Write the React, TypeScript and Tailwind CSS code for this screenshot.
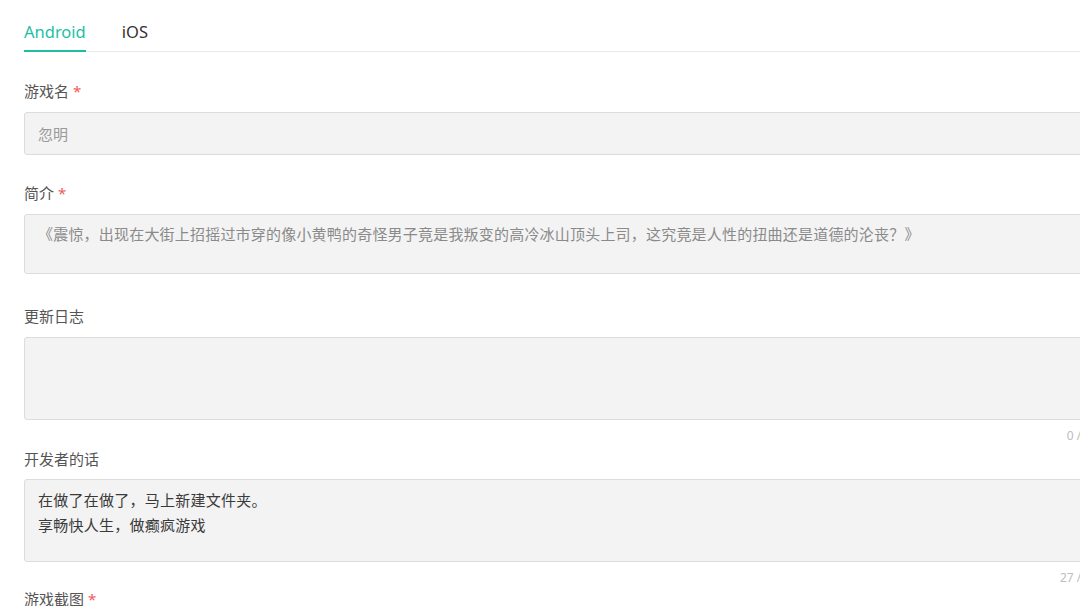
import {useState} from 'react';

type Tab = 'android' | 'ios';

const FONT = '"Noto Sans", "Noto Sans CJK SC", sans-serif';

function Label({text, required}: {text: string; required?: boolean}) {
  return (
    <div className="h-5 flex items-center text-[15px] leading-5 text-[#555]">
      {text}
      {required && <span className="ml-1 text-[#f25a5a]">*</span>}
    </div>
  );
}

function Counter({count, max}: {count: number; max: number}) {
  return (
    <div className="h-5 text-right text-[12px] leading-5 text-[#bdbdbd]">
      {count} / {max}
    </div>
  );
}

export default function App() {
  const [tab, setTab] = useState<Tab>('android');
  const [name] = useState('');
  const [intro] = useState(
    '《震惊，出现在大街上招摇过市穿的像小黄鸭的奇怪男子竟是我叛变的高冷冰山顶头上司，这究竟是人性的扭曲还是道德的沦丧？》',
  );
  const [changelog, setChangelog] = useState('');
  const [devNote, setDevNote] = useState('在做了在做了，马上新建文件夹。\n享畅快人生，做癫疯游戏');

  return (
    <div className="w-[1080px] h-[606px] overflow-hidden bg-white" style={{fontFamily: FONT}}>
      <div className="w-[1150px] pl-6">
        {/* platform tabs */}
        <div className="flex h-[52px] border-b border-[#e9e9e9] gap-[36px]">
          <button
            onClick={() => setTab('android')}
            className={`h-[52px] pt-[14px] text-[16.5px] leading-[22px] border-b-2 -mb-px ${
              tab === 'android' ? 'text-[#1dbfa3] border-[#1dbfa3]' : 'text-[#333] border-transparent'
            }`}
          >
            Android
          </button>
          <button
            onClick={() => setTab('ios')}
            className={`h-[52px] pt-[14px] text-[16.5px] leading-[22px] border-b-2 -mb-px ${
              tab === 'ios' ? 'text-[#1dbfa3] border-[#1dbfa3]' : 'text-[#333] border-transparent'
            }`}
          >
            iOS
          </button>
        </div>

        <form className="w-[1081px]">
          <div className="mt-[29px]">
            <Label text="游戏名" required/>
            <input
              value={name}
              readOnly
              placeholder="忽明"
              className="mt-[11px] w-full h-[43px] px-[13px] bg-[#f3f3f3] border border-[#dcdcdc] rounded-[3px] text-[15px] text-[#333] placeholder:text-[#9a9a9a] outline-none"
            />
          </div>

          <div className="mt-[28px]">
            <Label text="简介" required/>
            <textarea
              value={intro}
              readOnly
              className="mt-[11px] block w-full h-[60px] px-[13px] pt-[7px] resize-none bg-[#f3f3f3] border border-[#dcdcdc] rounded-[3px] text-[15px] leading-[25px] tracking-[0.2px] text-[#8a8a8a] outline-none"
            />
          </div>

          <div className="mt-[32px]">
            <Label text="更新日志"/>
            <textarea
              value={changelog}
              onChange={(e) => setChangelog(e.target.value)}
              className="mt-[11px] block w-full h-[83px] px-[13px] pt-[8px] resize-none bg-[#f3f3f3] border border-[#dcdcdc] rounded-[3px] text-[15px] leading-[25px] text-[#333] outline-none"
            />
            <div className="mt-[6px]">
              <Counter count={changelog.length} max={500}/>
            </div>
          </div>

          <div className="mt-[3px]">
            <Label text="开发者的话"/>
            <textarea
              value={devNote}
              onChange={(e) => setDevNote(e.target.value)}
              className="mt-[10px] block w-full h-[83px] px-[13px] pt-[8px] resize-none bg-[#f3f3f3] border border-[#dcdcdc] rounded-[3px] text-[15px] leading-[25px] tracking-[0.25px] text-[#3a3a3a] outline-none"
            />
            <div className="mt-[6px]">
              <Counter count={devNote.length} max={500}/>
            </div>
          </div>

          <div className="mt-[1px]">
            <Label text="游戏截图" required/>
          </div>
        </form>
      </div>
    </div>
  );
}
